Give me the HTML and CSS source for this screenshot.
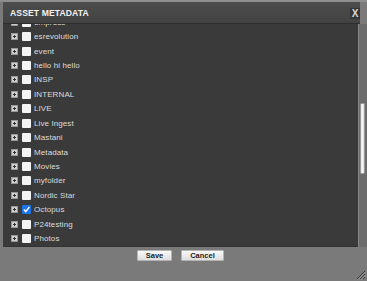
FILE: index.html
```html
<html><head>
<meta charset="UTF-8">
<link rel="stylesheet" href="styles.css">
</head><body>
<div class="dialog">
	<div class="titlebar">
		<span class="title">ASSET METADATA</span>
		<span class="close">X</span>
	</div>
	<div class="main">
		<div class="list">
			<ul class="tree">
				<li><span class="plus"></span><span class="box"></span><span class="name">empress</span></li>
				<li><span class="plus"></span><span class="box"></span><span class="name">esrevolution</span></li>
				<li><span class="plus"></span><span class="box"></span><span class="name">event</span></li>
				<li><span class="plus"></span><span class="box"></span><span class="name">hello hi hello</span></li>
				<li><span class="plus"></span><span class="box"></span><span class="name">INSP</span></li>
				<li><span class="plus"></span><span class="box"></span><span class="name">INTERNAL</span></li>
				<li><span class="plus"></span><span class="box"></span><span class="name">LIVE</span></li>
				<li><span class="plus"></span><span class="box"></span><span class="name">Live Ingest</span></li>
				<li><span class="plus"></span><span class="box"></span><span class="name">Mastani</span></li>
				<li><span class="plus"></span><span class="box"></span><span class="name">Metadata</span></li>
				<li><span class="plus"></span><span class="box"></span><span class="name">Movies</span></li>
				<li><span class="plus"></span><span class="box"></span><span class="name">myfolder</span></li>
				<li><span class="plus"></span><span class="box"></span><span class="name">Nordic Star</span></li>
				<li><span class="plus"></span><span class="box checked"><svg width="9" height="9" viewBox="0 0 9 9"><path d="M1.8 4.6 L3.7 6.6 L7.4 2" fill="none" stroke="#fff" stroke-width="1.4"/></svg></span><span class="name">Octopus</span></li>
				<li><span class="plus"></span><span class="box"></span><span class="name">P24testing</span></li>
				<li><span class="plus"></span><span class="box"></span><span class="name">Photos</span></li>
			</ul>
		</div>
		<div class="scrollbar"><div class="thumb"></div></div>
	</div>
	<div class="footer">
		<button class="btn save">Save</button>
		<button class="btn cancel">Cancel</button>
		<svg class="grip" width="11" height="11" viewBox="0 0 11 11">
			<path d="M10 2 L2 10 M10 5 L5 10 M10 8 L8 10" stroke="#3a3a3a" stroke-width="1"/>
			<path d="M10.8 2.8 L2.8 10.8 M10.8 5.8 L5.8 10.8" stroke="#aaa" stroke-width="0.8"/>
		</svg>
	</div>
</div>
</body></html>
```
FILE: styles.css
```css
body {
	margin: 0;
	padding: 0;
	background: #7a7a7a;
	font-family: "Liberation Sans", Arial, sans-serif;
}

.dialog {
	width: 367px;
	height: 281px;
	display: flex;
	flex-direction: column;
	background: #7a7a7a;
	border-top: 2px solid #8e8e8e;
	box-sizing: border-box;
	padding-left: 3px;
}

.titlebar {
	height: 22px;
	margin-right: 7px;
	display: flex;
	align-items: center;
	justify-content: space-between;
	background: linear-gradient(#4d4d4d, #424242);
	border-bottom: 1px solid #2e2e2e;
	box-sizing: border-box;
	padding: 0 0 0 7px;
}

.title {
	color: #f2f2f2;
	font-weight: bold;
	font-size: 8.6px;
	letter-spacing: 0.1px;
	margin-top: 1px;
}

.close {
	width: 10px;
	height: 11px;
	background: #363636;
	color: #d8d8d8;
	font-weight: bold;
	font-size: 10px;
	line-height: 11px;
	text-align: center;
	margin-top: 2px;
}

.main {
	height: 223px;
	display: flex;
}

.list {
	width: 355px;
	background: #3a3a3a;
	overflow: hidden;
	border-bottom: 1px solid #333;
}

.tree {
	list-style: none;
	margin: -9px 0 0 0;
	padding: 0;
}

.tree li {
	height: 14.43px;
	display: flex;
	align-items: center;
	padding-left: 8px;
}

.plus {
	width: 5px;
	height: 5px;
	background: #cfcfcf;
	position: relative;
	margin-right: 4px;
	border: 0.5px solid #999;
}

.plus::before {
	content: "";
	position: absolute;
	left: 1px;
	top: 2px;
	width: 3px;
	height: 1px;
	background: #333;
}

.plus::after {
	content: "";
	position: absolute;
	left: 2px;
	top: 1px;
	width: 1px;
	height: 3px;
	background: #333;
}

.box {
	width: 9px;
	height: 9px;
	background: #f4f4f4;
	border-radius: 1px;
	margin-right: 3px;
	display: flex;
}

.box.checked {
	background: #1a73e8;
}

.name {
	color: #dcdcdc;
	font-size: 8px;
	letter-spacing: 0.1px;
}

.scrollbar {
	width: 9px;
	background: #6c6c6c;
	border-left: 1px solid #888;
	box-sizing: border-box;
	padding-top: 79px;
	padding-left: 1px;
}

.thumb {
	width: 5px;
	height: 71px;
	background: linear-gradient(90deg, #e0e0e0, #fafafa, #dcdcdc);
	border: 1px solid #9a9a9a;
	box-sizing: border-box;
	border-radius: 1px;
}

.footer {
	flex: 1;
	display: flex;
	justify-content: center;
	align-items: flex-start;
	gap: 9px;
	padding-top: 3px;
	padding-right: 9px;
	position: relative;
}

.btn {
	height: 11px;
	padding: 0;
	font-family: "Liberation Sans", Arial, sans-serif;
	font-weight: bold;
	font-size: 7.5px;
	color: #222;
	background: linear-gradient(#fafafa, #dedede);
	border: 1px solid #b5b5b5;
	border-radius: 1px;
	line-height: 9px;
}

.save {
	width: 35px;
}

.cancel {
	width: 43px;
}

.grip {
	position: absolute;
	right: 1px;
	bottom: 1px;
}
```
